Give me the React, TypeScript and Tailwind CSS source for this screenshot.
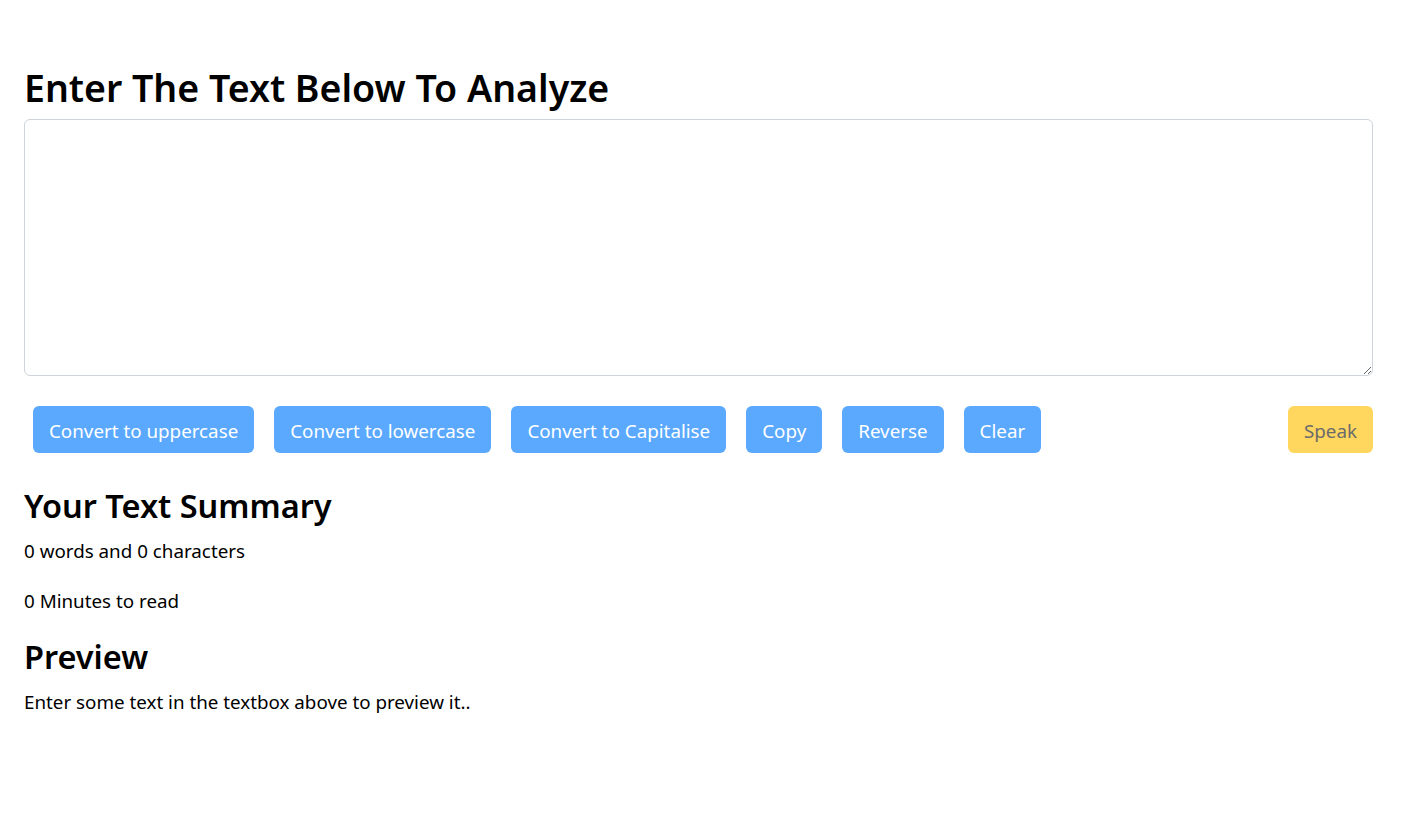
import React, { useState } from "react";

const font = { fontFamily: '"Noto Sans", "Open Sans", sans-serif' };

function App() {
  const [text, setText] = useState("");

  const words = text.split(/\s+/).filter((w) => w.length !== 0).length;
  const btn =
    "bg-[#5aa9fe] text-white text-[18.8px] h-[47px] px-4 pt-[3px] rounded-[6px] whitespace-nowrap";

  return (
    <div className="bg-white min-h-screen text-black" style={font}>
      <div className="pl-6 pr-[35px] pt-[64px]">
        <h1 className="text-[37.5px] leading-[47px] font-semibold mb-[8px]">
          Enter The Text Below To Analyze
        </h1>
        <textarea
          className="block w-full h-[257px] border border-[#ced4da] rounded-[6px] px-3 py-2 text-[18.8px] outline-none"
          value={text}
          onChange={(e) => setText(e.target.value)}
        />

        <div className="flex items-center gap-5 pl-[9px] mt-[30px]">
          <button className={btn} onClick={() => setText(text.toUpperCase())}>
            Convert to uppercase
          </button>
          <button className={btn} onClick={() => setText(text.toLowerCase())}>
            Convert to lowercase
          </button>
          <button className={btn}>Convert to Capitalise</button>
          <button className={btn}>Copy</button>
          <button className={btn}>Reverse</button>
          <button className={btn} onClick={() => setText("")}>
            Clear
          </button>
          <button className="ml-auto bg-[#ffd65e] text-[#6b6b6b] text-[18.8px] h-[47px] px-4 pt-[3px] rounded-[6px]">
            Speak
          </button>
        </div>

        <div className="mt-[32px]">
          <h2 className="text-[32.5px] leading-[41px] font-semibold mb-[10px]">
            Your Text Summary
          </h2>
          <p className="text-[18.8px] leading-[30px] mb-5">
            {words} words and {text.length} characters
          </p>
          <p className="text-[18.8px] leading-[30px] mb-5">
            {0.008 * words} Minutes to read
          </p>
          <h2 className="text-[32.5px] leading-[41px] font-semibold mb-[10px]">
            Preview
          </h2>
          <p className="text-[18.8px] leading-[30px]">
            {text.length > 0 ? text : "Enter some text in the textbox above to preview it.."}
          </p>
        </div>
      </div>
    </div>
  );
}

export default App;
